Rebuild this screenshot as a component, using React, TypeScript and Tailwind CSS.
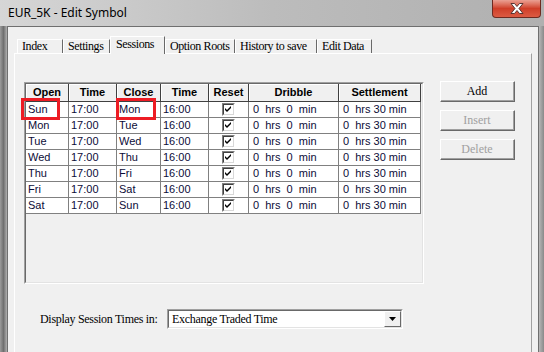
import React from "react";

const rows = [
  ["Sun", "Mon"],
  ["Mon", "Tue"],
  ["Tue", "Wed"],
  ["Wed", "Thu"],
  ["Thu", "Fri"],
  ["Fri", "Sat"],
  ["Sat", "Sun"],
];

const tabs = [
  { label: "Index", cls: "w-[46px]" },
  { label: "Settings", cls: "w-[47px]" },
  { label: "Sessions", cls: "w-[55px]", active: true },
  { label: "Option Roots", cls: "w-[70px]" },
  { label: "History to save", cls: "w-[82px]" },
  { label: "Edit Data", cls: "w-[55px]" },
];

const headers = ["Open", "Time", "Close", "Time", "Reset", "Dribble", "Settlement"];

function CheckBox() {
  return (
    <span className="flex w-[13px] h-[13px] border border-t-[#808080] border-l-[#808080] border-r-white border-b-white">
      <span className="flex flex-1 items-center justify-center bg-white border border-t-[#404040] border-l-[#404040] border-r-[#d8d8d8] border-b-[#d8d8d8]">
        <svg width="7" height="7" viewBox="0 0 7 7">
          <path d="M0 2 L2 4 L6 0 L6 2 L2 6 L0 4 Z" fill="#000" />
        </svg>
      </span>
    </span>
  );
}

function Button({ label, disabled }: { label: string; disabled?: boolean }) {
  return (
    <div className="h-[21px] border border-t-white border-l-white border-r-[#696969] border-b-[#696969]">
      <div
        className={`h-full flex items-center justify-center border-r border-b border-[#a0a0a0] text-[12px] ${
          disabled ? "text-[#a0a0a0]" : "text-black"
        }`}
      >
        {label}
      </div>
    </div>
  );
}

export default function App() {
  return (
    <div className="relative w-[544px] h-[352px] overflow-hidden flex flex-col bg-gradient-to-b from-[#c4c4c4] to-[#a9a9a9] font-['Liberation_Serif',serif]">
      {/* title bar */}
      <div className="h-[26px] shrink-0 flex items-start justify-between pl-[8px] pr-[3px] bg-gradient-to-r from-[#d6d6d6] via-[#bcbcbc] to-[#b0b0b0]">
        <span className="pt-[4px] text-[12px] leading-[18px] text-black font-['Noto_Sans',sans-serif]">
          EUR_5K - Edit Symbol
        </span>
        <div className="w-[49px] h-[18px] rounded-b-[4px] border border-t-0 border-[#6e2a20] bg-gradient-to-b from-[#eaa093] via-[#cf3e28] to-[#dc5a42] flex items-center justify-center">
          <svg width="14" height="11" viewBox="0 0 14 11">
            <path
              d="M1 0.5 H4.5 L7 3.5 L9.5 0.5 H13 L9 5.5 L13 10.5 H9.5 L7 7.5 L4.5 10.5 H1 L5 5.5 Z"
              fill="#fff"
              stroke="#4a2a28"
              strokeWidth="0.9"
            />
          </svg>
        </div>
      </div>

      <div className="flex flex-1">
        <div className="w-[7px] shrink-0 bg-gradient-to-r from-[#9c9c9c] via-[#6f6f6f] to-[#b0b0b0]" />

        {/* dialog body */}
        <div className="w-[532px] shrink-0 bg-[#f0f0f0] border border-[#6f6f6f] border-b-0 flex flex-col">
          {/* tabs */}
          <div className="flex items-end h-[18px] mt-[8px] ml-[9px]">
            {tabs.map((t) =>
              t.active ? (
                <div
                  key={t.label}
                  className={`${t.cls} h-[18px] relative z-10 -mb-[1px] bg-[#f0f0f0] border-l border-t border-white border-r border-r-[#696969] pl-[5px] text-[12px] tracking-[-0.4px] leading-[15px] text-black whitespace-nowrap`}
                >
                  {t.label}
                </div>
              ) : (
                <div
                  key={t.label}
                  className={`${t.cls} h-[14px] border-l border-t border-white border-r border-r-[#696969] pl-[4px] text-[12px] tracking-[-0.4px] leading-[13px] text-black whitespace-nowrap overflow-hidden`}
                >
                  {t.label}
                </div>
              )
            )}
          </div>

          {/* tab panel */}
          <div className="flex-1 ml-[6px] mr-[6px] border-l border-t border-white border-r border-r-[#a0a0a0] pt-[28px] pl-[9px] flex flex-col">
            <div className="flex">
              {/* session table */}
              <div className="w-[400px] h-[202px] border border-t-[#a0a0a0] border-l-[#a0a0a0] border-r-white border-b-white">
                <div className="h-full border border-t-[#696969] border-l-[#696969] border-r-[#e3e3e3] border-b-[#e3e3e3] font-['Liberation_Sans',sans-serif] text-[11px]">
                  <div className="grid grid-cols-[43px_48px_44px_48px_40px_90px_82px]">
                    {headers.map((h, i) => (
                      <div
                        key={i}
                        className="h-[18px] flex items-center justify-center font-bold text-black border-r border-b border-[#404040] shadow-[inset_1px_1px_0_#ffffff] bg-[#f0f0f0]"
                      >
                        {h}
                      </div>
                    ))}
                    {rows.map(([open, close]) => (
                      <React.Fragment key={open}>
                        <div className="h-[16px] bg-white border-r border-b border-[#808080] pl-[2px] leading-[15px] text-[#0c0c38]">{open}</div>
                        <div className="h-[16px] bg-white border-r border-b border-[#808080] pl-[2px] leading-[15px] text-[#0c0c38]">17:00</div>
                        <div className="h-[16px] bg-white border-r border-b border-[#808080] pl-[2px] leading-[15px] text-[#0c0c38]">{close}</div>
                        <div className="h-[16px] bg-white border-r border-b border-[#808080] pl-[2px] leading-[15px] text-[#0c0c38]">16:00</div>
                        <div className="h-[16px] bg-white border-r border-b border-[#808080] flex items-center justify-center">
                          <CheckBox />
                        </div>
                        <div className="h-[16px] bg-white border-r border-b border-[#808080] pl-[4px] leading-[15px] whitespace-pre text-[#0c0c38]">0  hrs  0  min</div>
                        <div className="h-[16px] bg-white border-r border-b border-[#808080] pl-[4px] leading-[15px] whitespace-pre text-[#0c0c38]">0  hrs 30 min</div>
                      </React.Fragment>
                    ))}
                  </div>
                </div>
              </div>

              {/* buttons */}
              <div className="ml-[16px] -mt-[1px] w-[75px] flex flex-col gap-[8px]">
                <Button label="Add" />
                <Button label="Insert" disabled />
                <Button label="Delete" disabled />
              </div>
            </div>

            {/* display times */}
            <div className="flex items-center mt-[25px] ml-[16px]">
              <span className="w-[127px] text-[12px] tracking-[-0.3px] text-black">Display Session Times in:</span>
              <div className="w-[236px] h-[20px] border border-t-[#a0a0a0] border-l-[#a0a0a0] border-r-white border-b-white">
                <div className="h-full flex items-center bg-white border border-t-[#696969] border-l-[#696969] border-r-[#e3e3e3] border-b-[#e3e3e3]">
                  <span className="flex-1 pl-[3px] text-[12px] tracking-[-0.3px] text-black">Exchange Traded Time</span>
                  <div className="w-[17px] h-full bg-[#f0f0f0] border border-t-white border-l-white border-r-[#696969] border-b-[#696969] flex items-center justify-center">
                    <svg width="7" height="4" viewBox="0 0 7 4">
                      <path d="M0 0 H7 L3.5 4 Z" fill="#000" />
                    </svg>
                  </div>
                </div>
              </div>
            </div>
          </div>
        </div>

        <div className="flex-1 bg-gradient-to-r from-[#b8b8b8] to-[#8a8a8a]" />
      </div>

      {/* highlight marks */}
      <div className="absolute left-[21px] top-[98px] w-[39px] h-[22px] border-[3px] border-[#ed1c24]" />
      <div className="absolute left-[116px] top-[98px] w-[40px] h-[22px] border-[3px] border-[#ed1c24]" />
    </div>
  );
}
